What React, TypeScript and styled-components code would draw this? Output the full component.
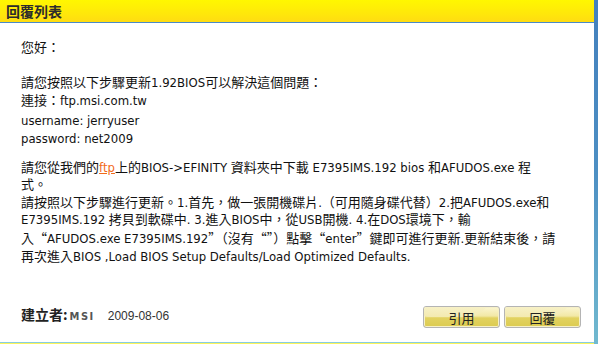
import React from "react";
import styled, { createGlobalStyle } from "styled-components";

const GlobalStyle = createGlobalStyle`
  html, body {
    margin: 0;
    padding: 0;
    background: #fff;
    overflow: hidden;
  }
`;

const Page = styled.div`
  display: flex;
  width: 598px;
  height: 344px;
  font-family: "DejaVu Sans Condensed", "DejaVu Sans", "Noto Sans CJK TC", sans-serif;
  color: #111;
`;

const Panel = styled.div`
  flex: 1;
  display: flex;
  flex-direction: column;
  min-width: 0;
`;

const SideBar = styled.div`
  width: 4px;
  background: linear-gradient(to bottom, #4380bd 0%, #4d8fc3 50%, #71b9cf 100%);
`;

const Header = styled.div`
  height: 22px;
  display: flex;
  align-items: center;
  padding-left: 6px;
  background: linear-gradient(to bottom, #fff700 0%, #ffe80a 60%, #ffdc12 100%);
  border-bottom: 1px solid #4a8ac8;
`;

const Title = styled.h1`
  margin: 0;
  font-family: "Noto Sans CJK TC", sans-serif;
  font-size: 14px;
  font-weight: 700;
  color: #2c2c2c;
`;

const Body = styled.div`
  flex: 1;
  display: flex;
  flex-direction: column;
  padding: 16px 13px 14px 21px;
`;

const Para = styled.p<{ $gap?: number }>`
  margin: 0 0 ${(p) => p.$gap ?? 0}px 0;
  font-size: 13px;
  line-height: 17.6px;
  white-space: nowrap;
`;

// full-width quotes, drawn with the CJK face as in the original page
const Q = styled.span`
  font-family: "Noto Sans CJK TC", sans-serif;
`;

const Link = styled.a`
  color: #f26a1b;
  text-decoration: underline;
`;

const Footer = styled.div`
  margin-top: auto;
  display: flex;
  align-items: center;
  justify-content: space-between;
`;

const Author = styled.div`
  display: flex;
  align-items: baseline;
  margin-top: -7px;
`;

const AuthorLabel = styled.span`
  font-family: "Noto Sans CJK TC", sans-serif;
  font-weight: 700;
  font-size: 14px;
  color: #222;
`;

const AuthorName = styled.span`
  margin-left: 2px;
  font-family: "DejaVu Sans Condensed", "DejaVu Sans", sans-serif;
  font-weight: 700;
  font-size: 11px;
  color: #555;
  letter-spacing: 1.5px;
`;

const DateText = styled.span`
  margin-left: 13px;
  font-family: "Liberation Sans", Arial, sans-serif;
  font-size: 12px;
  color: #333;
`;

const Buttons = styled.div`
  display: flex;
  gap: 4px;
`;

const Button = styled.button`
  position: relative;
  width: 77px;
  height: 22px;
  border: 1px solid #b4b4b4;
  border-radius: 3px;
  background: linear-gradient(to bottom, #fbf6d2 0%, #f2e8a6 45%, #e2d260 55%, #dccb50 100%);
  font-family: "Noto Sans CJK TC", sans-serif;
  font-size: 13px;
  color: #222;
  padding: 0;
  overflow: hidden;
  box-shadow: inset 0 0 0 1px #f6f0c8;

  &::before {
    content: "";
    position: absolute;
    left: -6px;
    right: 8px;
    top: -14px;
    height: 24px;
    border-radius: 0 0 60px 30px;
    background: linear-gradient(to bottom, #fdfae6, #f3eab0);
  }

  span {
    position: relative;
  }
`;

const BottomLines = styled.div`
  height: 1px;
  border-top: 1px solid #86cde0;
  background: #fbf45a;
`;

export default function App() {
  return (
    <>
      <GlobalStyle />
      <Page>
        <Panel>
          <Header>
            <Title>回覆列表</Title>
          </Header>
          <Body>
            <Para $gap={17.6}>您好：</Para>
            <Para>請您按照以下步驟更新1.92BIOS可以解決這個問題：</Para>
            <Para $gap={3}>連接：ftp.msi.com.tw</Para>
            <Para>username: jerryuser</Para>
            <Para $gap={11}>password: net2009</Para>
            <Para>
              請您從我們的<Link>ftp</Link>上的BIOS-&gt;EFINITY 資料夾中下載 E7395IMS.192 bios 和AFUDOS.exe 程
              <br />
              式。
            </Para>
            <Para>
              請按照以下步驟進行更新。1.首先，做一張開機碟片.（可用隨身碟代替）2.把AFUDOS.exe和
              <br />
              E7395IMS.192 拷貝到軟碟中. 3.進入BIOS中，從USB開機. 4.在DOS環境下，輸
              <br />
              入<Q>“</Q>AFUDOS.exe E7395IMS.192<Q>”</Q>（沒有<Q>“”</Q>）點擊<Q>“</Q>enter<Q>”</Q>鍵即可進行更新.更新結束後，請
              <br />
              再次進入BIOS ,Load BIOS Setup Defaults/Load Optimized Defaults.
            </Para>
            <Footer>
              <Author>
                <AuthorLabel>建立者:</AuthorLabel>
                <AuthorName>MSI</AuthorName>
                <DateText>2009-08-06</DateText>
              </Author>
              <Buttons>
                <Button>
                  <span>引用</span>
                </Button>
                <Button>
                  <span>回覆</span>
                </Button>
              </Buttons>
            </Footer>
          </Body>
          <BottomLines />
        </Panel>
        <SideBar />
      </Page>
    </>
  );
}
